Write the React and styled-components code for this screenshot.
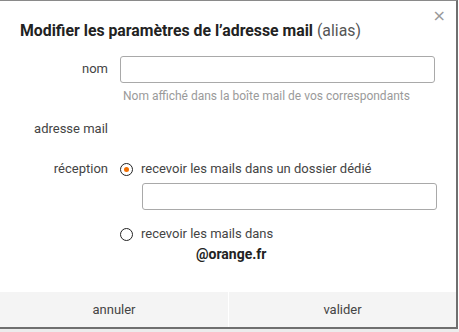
import React from "react";
import styled, { createGlobalStyle } from "styled-components";

const Global = createGlobalStyle`
  html, body { margin: 0; padding: 0; background: #fff; }
  body { font-family: Roboto, "Liberation Sans", Arial, sans-serif; color: #333; }
  * { box-sizing: border-box; }
`;

const Frame = styled.div`
  width: 459px;
  height: 332px;
  background: #fff;
  border-bottom: 3px solid #ececec;
`;

const Dialog = styled.div`
  position: relative;
  width: 458px;
  height: 329px;
  border-top: 1px solid #8a8a8a;
  border-right: 2px solid #6f6f6f;
  border-bottom: 2px solid #6f6f6f;
  display: flex;
  flex-direction: column;
`;

const Close = styled.button`
  position: absolute;
  top: 7px;
  right: 10px;
  border: 0;
  background: none;
  padding: 0;
  font-size: 16px;
  line-height: 16px;
  color: #999;
  font-family: "DejaVu Sans", sans-serif;
`;

const Title = styled.h1`
  margin: 0;
  padding: 20px 0 0 20px;
  font-size: 15.8px;
  line-height: 20px;
  font-weight: 700;
  color: #222;
  span { font-weight: 400; color: #555; }
`;

const Body = styled.div`
  flex: 1;
  display: flex;
  flex-direction: column;
  padding-top: 15px;
`;

const Row = styled.div`
  display: grid;
  grid-template-columns: 108px 1fr;
  column-gap: 12px;
  align-items: start;
  margin-top: ${(p) => p.$mt || 0}px;
`;

const Label = styled.div`
  text-align: right;
  font-size: 13px;
  color: #444;
  line-height: 26px;
`;

const Field = styled.div`
  display: flex;
  flex-direction: column;
  padding-right: ${(p) => p.$pr || 0}px;
`;

const Input = styled.div`
  height: 27px;
  border: 1px solid #a9a9a9;
  border-radius: 3px;
  background: #fff;
  margin-left: ${(p) => p.$ml || 0}px;
  margin-top: ${(p) => p.$mt || 0}px;
`;

const Hint = styled.div`
  font-size: 12px;
  color: #9a9a9a;
  padding: 5px 0 0 3px;
  line-height: 16px;
`;

const Option = styled.div`
  display: flex;
  align-items: center;
  gap: 8px;
  font-size: 13px;
  color: #444;
  line-height: 26px;
  margin-top: ${(p) => p.$mt || 0}px;
`;

const Radio = styled.span`
  width: 13px;
  height: 13px;
  border: 1.5px solid #222;
  border-radius: 50%;
  display: inline-flex;
  align-items: center;
  justify-content: center;
  &::after {
    content: "";
    width: 5px;
    height: 5px;
    border-radius: 50%;
    background: ${(p) => (p.$on ? "#f16e00" : "transparent")};
  }
`;

const Domain = styled.div`
  font-size: 14px;
  font-weight: 700;
  color: #222;
  padding-left: 76px;
  line-height: 16px;
  margin-top: -1px;
`;

const Footer = styled.div`
  display: grid;
  grid-template-columns: 228px 1fr;
  column-gap: 1px;
  background: #fff;
  height: 35px;
`;

const FootButton = styled.button`
  border: 0;
  background: #f4f4f4;
  font-family: inherit;
  font-size: 13px;
  color: #444;
  padding: 0;
`;

export default function App() {
  return (
    <Frame>
      <Global />
      <Dialog>
        <Close aria-label="fermer">×</Close>
        <Title>
          Modifier les paramètres de l’adresse mail <span>(alias)</span>
        </Title>
        <Body>
          <Row>
            <Label>nom</Label>
            <Field $pr={21}>
              <Input />
              <Hint>Nom affiché dans la boîte mail de vos correspondants</Hint>
            </Field>
          </Row>
          <Row $mt={12}>
            <Label>adresse mail</Label>
            <div />
          </Row>
          <Row $mt={14}>
            <Label>réception</Label>
            <Field $pr={19}>
              <Option>
                <Radio $on />
                recevoir les mails dans un dossier dédié
              </Option>
              <Input $ml={22} $mt={1} />
              <Option $mt={11}>
                <Radio />
                recevoir les mails dans
              </Option>
              <Domain>@orange.fr</Domain>
            </Field>
          </Row>
        </Body>
        <Footer>
          <FootButton>annuler</FootButton>
          <FootButton>valider</FootButton>
        </Footer>
      </Dialog>
    </Frame>
  );
}
